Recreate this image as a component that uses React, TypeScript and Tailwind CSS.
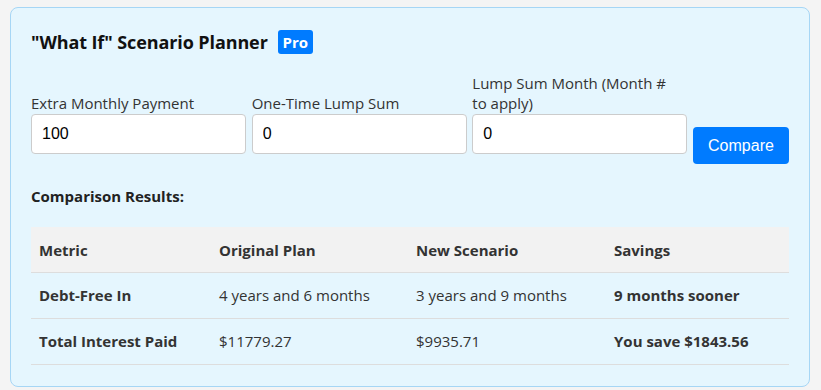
import React from "react";

const sans = { fontFamily: '"Open Sans", "Noto Sans", sans-serif' };

export default function App() {
  return (
    <div className="min-h-[390px] w-[821px] bg-[#f4f4f4] pt-[7px] pl-[10px]" style={sans}>
      <div className="w-[800px] rounded-[8px] border border-[#a6d6f5] bg-[#e5f6fe] px-[20px] pt-[20px] pb-[21px] text-[#333]">
        <div className="flex h-[28px] items-center gap-[10px]">
          <h3 className="text-[18px] font-bold leading-[28px] tracking-[-0.1px] text-[#111]">"What If" Scenario Planner</h3>
          <span className="flex h-[24px] w-[35px] items-center justify-center rounded-[3px] bg-[#007bff] text-[15px] font-bold text-white">Pro</span>
        </div>
        <div className="mt-[17px] flex items-end gap-[5.67px]">
          {[
            { label: "Extra Monthly Payment", value: "100" },
            { label: "One-Time Lump Sum", value: "0" },
            { label: "Lump Sum Month (Month # to apply)", value: "0" },
          ].map((f) => (
            <div key={f.label} className="mb-[10px] flex w-[215px] flex-col">
              <label className="mb-[1px] pr-[14px] text-[15px] leading-[20px] text-[#333]">{f.label}</label>
              <input
                readOnly
                value={f.value}
                className="h-[40px] w-full rounded-[4px] border border-[#ccc] bg-white px-[10px] text-[16px] text-black outline-none"
                style={{ fontFamily: '"Liberation Sans", Arial, sans-serif' }}
              />
            </div>
          ))}
          <button
            className="h-[37px] w-[96px] rounded-[4px] bg-[#007bff] text-[16px] text-white"
            style={{ fontFamily: '"Liberation Sans", Arial, sans-serif' }}
          >
            Compare
          </button>
        </div>
        <h4 className="mt-[22px] text-[15px] font-bold leading-[20px] text-[#222]">Comparison Results:</h4>
        <table className="mt-[21px] w-[758px] border-collapse text-[15px] leading-[21px]">
          <thead>
            <tr className="bg-[#f2f2f2]">
              <th className="w-[180px] border-b border-[#ddd] px-[8px] pt-[13px] pb-[11px] text-left font-bold text-[#333]">Metric</th>
              <th className="w-[197px] border-b border-[#ddd] px-[8px] pt-[13px] pb-[11px] text-left font-bold text-[#333]">Original Plan</th>
              <th className="w-[198px] border-b border-[#ddd] px-[8px] pt-[13px] pb-[11px] text-left font-bold text-[#333]">New Scenario</th>
              <th className="border-b border-[#ddd] px-[8px] pt-[13px] pb-[11px] text-left font-bold text-[#333]">Savings</th>
            </tr>
          </thead>
          <tbody>
            <tr>
              <td className="border-b border-[#ddd] px-[8px] py-[12px] font-bold">Debt-Free In</td>
              <td className="border-b border-[#ddd] px-[8px] py-[12px]">4 years and 6 months</td>
              <td className="border-b border-[#ddd] px-[8px] py-[12px]">3 years and 9 months</td>
              <td className="border-b border-[#ddd] px-[8px] py-[12px] font-bold">9 months sooner</td>
            </tr>
            <tr>
              <td className="border-b border-[#ddd] px-[8px] py-[12px] font-bold">Total Interest Paid</td>
              <td className="border-b border-[#ddd] px-[8px] py-[12px]">$11779.27</td>
              <td className="border-b border-[#ddd] px-[8px] py-[12px]">$9935.71</td>
              <td className="border-b border-[#ddd] px-[8px] py-[12px] font-bold">You save $1843.56</td>
            </tr>
          </tbody>
        </table>
      </div>
    </div>
  );
}
